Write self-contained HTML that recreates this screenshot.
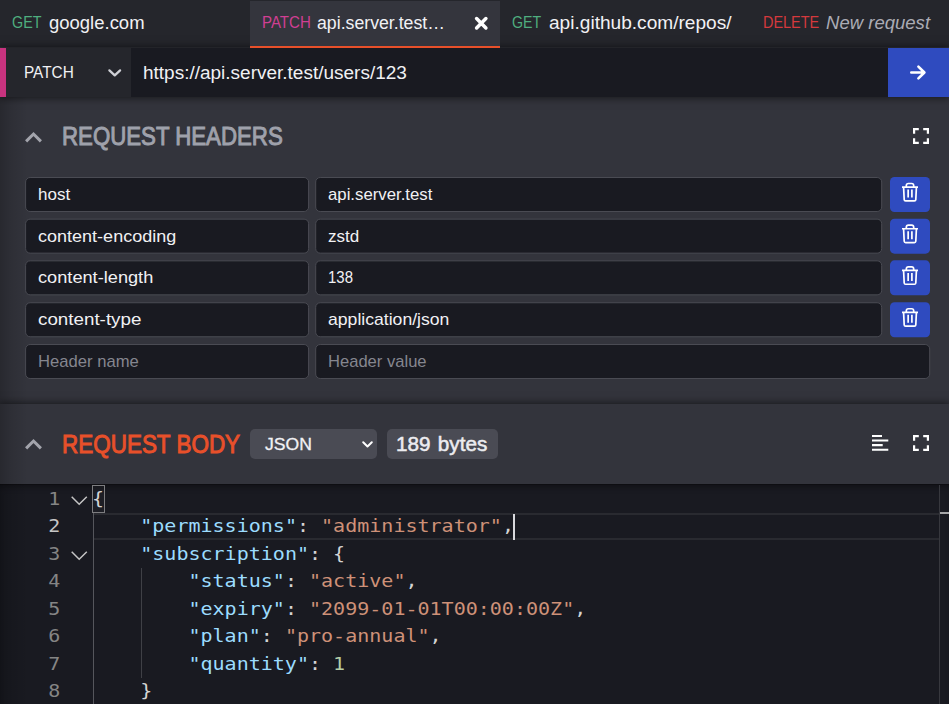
<!DOCTYPE html>
<html lang="en">
<head>
<meta charset="utf-8">
<title>HTTP Client</title>
<style>
*{box-sizing:border-box;margin:0;padding:0}
html,body{width:949px;height:704px;overflow:hidden;background:#33343c;}
body{font-family:"Liberation Sans",sans-serif;color:#f1f1f4;position:relative;}
.abs{position:absolute;white-space:nowrap;}
svg{position:absolute;overflow:visible}
/* tabs */
#tabs{position:absolute;left:0;top:0;width:949px;height:47px;background:#25262c;}
.tab{position:absolute;top:0;height:47px;}
.tx{position:absolute;transform-origin:0 0;white-space:nowrap;line-height:20px;height:20px;}
.tab .m{top:13.2px;font-size:16px;}
.tab .t{top:13px;font-size:17.5px;color:#f1f1f4;}
#tab2{left:250px;width:250px;top:1px;height:46.6px;background:#34353d;border-bottom:2.3px solid #e8502a;z-index:3;}
.get{color:#4fae7f}.patch{color:#d03f93}.delete{color:#d4393d}
/* url bar */
#urlbar{position:absolute;left:0;top:47.5px;width:949px;height:49.5px;background:#191a21;box-shadow:0 0 8px 1px rgba(0,0,0,.55);z-index:2;}
#pink{position:absolute;left:0;top:0;width:6px;height:49.5px;background:#c8337f;}
#method{position:absolute;left:6px;top:0;width:124.5px;height:49.5px;background:#25262c;}
#send{position:absolute;left:888px;top:0;width:61px;height:49.5px;background:#2f4bbf;}
/* headers */
.h1{font-size:26px;line-height:30px;height:30px;font-weight:normal;-webkit-text-stroke:1px currentColor;}
.inp{position:absolute;left:0;top:0;height:34.8px;background:#191a21;border:1px solid #4a4b53;border-radius:5px;}
.it{font-size:17px;color:#f1f1f4;}
.it.ph{color:#85868f;}
.del{position:absolute;left:0;top:0;width:40px;height:34.8px;background:#2f4bbf;border-radius:4.5px;}
/* body */
#bodyhead{position:absolute;left:0;top:404px;width:949px;height:80px;background:#33343c;box-shadow:0 0 8px 1px rgba(0,0,0,.55);}
.pill{position:absolute;top:24.75px;height:30.5px;background:#4a4b54;border-radius:5px;}
#editor{position:absolute;left:0;top:484px;width:949px;height:220px;background:#191a21;border-top:1px solid #0e0e12;box-shadow:inset 0 5px 6px -3px rgba(0,0,0,.35);font-family:"DejaVu Sans Mono","Liberation Mono",monospace;font-size:18px;}
.ln{position:absolute;left:0;width:60.4px;margin-top:-0.5px;transform:scaleX(1.11);transform-origin:100% 0;text-align:right;color:#858585;line-height:27.5px;height:27.5px;white-space:pre;}
.ln.act{color:#c6c6c6}
.cl{position:absolute;left:91.5px;margin-top:-0.5px;transform:scaleX(1.1123);transform-origin:0 0;white-space:pre;line-height:27.5px;height:27.5px;color:#d4d4d4;}
.k{color:#9cdcfe}.s{color:#ce9178}.n{color:#b5cea8}
.guide{position:absolute;width:1px;background:#3f4046;}
</style>
</head>
<body>
<div id="tabs">
  <div class="tab" style="left:0;width:250px"><span id="t1m" class="tx m get" style="left:12px;transform:scaleX(0.894)">GET</span><span id="t1t" class="tx t" style="left:49px;transform:scaleX(1.056)">google.com</span></div>
  <div class="tab" id="tab2"><span id="t2m" class="tx m patch" style="left:12.3px;margin-top:-1px;transform:scaleX(0.94)">PATCH</span><span id="t2t" class="tx t" style="left:67px;margin-top:-1px;transform:scaleX(1.012)">api.server.test…</span>
    <svg style="left:225.25px;top:15.6px" width="12.5" height="12.5" viewBox="0 0 12.5 12.5"><path d="M1.6 1.6L10.9 10.9M10.9 1.6L1.6 10.9" stroke="#fff" stroke-width="3.5" stroke-linecap="round"/></svg>
  </div>
  <div class="tab" style="left:500px;width:250px"><span id="t3m" class="tx m get" style="left:12px;transform:scaleX(0.886)">GET</span><span id="t3t" class="tx t" style="left:49px;transform:scaleX(1.091)">api.github.com/repos/</span></div>
  <div class="tab" style="left:750px;width:199px"><span id="t4m" class="tx m delete" style="left:13px;transform:scaleX(0.903)">DELETE</span><span id="t4t" class="tx t" style="left:76px;font-style:italic;color:#abacb5;transform:scaleX(1.059)">New request</span></div>
</div>
<div id="urlbar">
  <div id="pink"></div>
  <div id="method"><span id="um" class="tx" style="left:17.5px;top:15.7px;font-size:16px;transform:scaleX(0.96)">PATCH</span>
    <svg style="left:101.5px;top:21px" width="13.5" height="8" viewBox="0 0 13.5 8"><path d="M1.4 1.4L6.75 6.4L12.1 1.4" fill="none" stroke="#cfd0d6" stroke-width="2.3" stroke-linecap="round" stroke-linejoin="round"/></svg>
  </div>
  <span id="url" class="tx" style="left:143px;top:15.5px;font-size:17.5px;transform:scaleX(1.085)">https://api.server.test/users/123</span>
  <div id="send"><svg style="left:22px;top:17.5px" width="16" height="15" viewBox="0 0 16 15"><path d="M1.3 7.5H14.2M8.4 1.6L14.4 7.5L8.4 13.4" fill="none" stroke="#fff" stroke-width="2.6" stroke-linecap="round" stroke-linejoin="round"/></svg></div>
</div>

<!-- REQUEST HEADERS -->
<svg style="left:25px;top:132.2px" width="17" height="11" viewBox="0 0 17 11"><path d="M1.1 9.4L8.5 2L15.9 9.4" fill="none" stroke="#a3a4ac" stroke-width="3"/></svg>
<span id="hh" class="tx h1" style="left:61.7px;top:120.5px;color:#9fa1ab;transform:scaleX(0.855)">REQUEST HEADERS</span>
<svg style="left:913px;top:128.4px" width="16" height="16" viewBox="0 0 16 16"><path d="M1.1 5.8V1.1H5.8M10.2 1.1H14.9V5.8M14.9 10.2V14.9H10.2M5.8 14.9H1.1V10.2" fill="none" stroke="#fff" stroke-width="2.2"/></svg>

<div class="inp" style="transform:translate(25.1px,177px);width:283.7px"></div><span id="r1a" class="tx it" style="left:38px;top:184.5px;transform:scaleX(1.0)">host</span>
<div class="inp" style="transform:translate(315.2px,177px);width:567.4px"></div><span id="r1b" class="tx it" style="left:328px;top:184.5px;transform:scaleX(0.986)">api.server.test</span>
<div class="del" style="transform:translate(890px,177px)"><svg style="left:0;top:0" width="40" height="34.5" viewBox="0 0 40 34.5"><path d="M12 10.1H28M16.3 9.8V8.6Q16.3 6.5 18.4 6.5H21.6Q23.7 6.5 23.7 8.6V9.8M13.6 10.4L14.2 22.6Q14.3 23.9 15.6 23.9H24.4Q25.7 23.9 25.8 22.6L26.4 10.4M18.15 12.6V20.6M21.9 12.6V20.6" fill="none" stroke="#fff" stroke-width="1.7" stroke-linejoin="round"/></svg></div>
<div class="inp" style="transform:translate(25.1px,218.65px);width:283.7px"></div><span id="r2a" class="tx it" style="left:38px;top:227px;transform:scaleX(1.06)">content-encoding</span>
<div class="inp" style="transform:translate(315.2px,218.65px);width:567.4px"></div><span id="r2b" class="tx it" style="left:328px;top:227px;transform:scaleX(1.0)">zstd</span>
<div class="del" style="transform:translate(890px,218.65px)"><svg style="left:0;top:0" width="40" height="34.5" viewBox="0 0 40 34.5"><path d="M12 10.1H28M16.3 9.8V8.6Q16.3 6.5 18.4 6.5H21.6Q23.7 6.5 23.7 8.6V9.8M13.6 10.4L14.2 22.6Q14.3 23.9 15.6 23.9H24.4Q25.7 23.9 25.8 22.6L26.4 10.4M18.15 12.6V20.6M21.9 12.6V20.6" fill="none" stroke="#fff" stroke-width="1.7" stroke-linejoin="round"/></svg></div>
<div class="inp" style="transform:translate(25.1px,260.35px);width:283.7px"></div><span id="r3a" class="tx it" style="left:38px;top:267.5px;transform:scaleX(1.07)">content-length</span>
<div class="inp" style="transform:translate(315.2px,260.35px);width:567.4px"></div><span id="r3b" class="tx it" style="left:328px;top:267.5px;transform:scaleX(0.88)">138</span>
<div class="del" style="transform:translate(890px,260.35px)"><svg style="left:0;top:0" width="40" height="34.5" viewBox="0 0 40 34.5"><path d="M12 10.1H28M16.3 9.8V8.6Q16.3 6.5 18.4 6.5H21.6Q23.7 6.5 23.7 8.6V9.8M13.6 10.4L14.2 22.6Q14.3 23.9 15.6 23.9H24.4Q25.7 23.9 25.8 22.6L26.4 10.4M18.15 12.6V20.6M21.9 12.6V20.6" fill="none" stroke="#fff" stroke-width="1.7" stroke-linejoin="round"/></svg></div>
<div class="inp" style="transform:translate(25.1px,302.25px);width:283.7px"></div><span id="r4a" class="tx it" style="left:38px;top:309.75px;transform:scaleX(1.105)">content-type</span>
<div class="inp" style="transform:translate(315.2px,302.25px);width:567.4px"></div><span id="r4b" class="tx it" style="left:328px;top:309.75px;transform:scaleX(1.036)">application/json</span>
<div class="del" style="transform:translate(890px,302.25px)"><svg style="left:0;top:0" width="40" height="34.5" viewBox="0 0 40 34.5"><path d="M12 10.1H28M16.3 9.8V8.6Q16.3 6.5 18.4 6.5H21.6Q23.7 6.5 23.7 8.6V9.8M13.6 10.4L14.2 22.6Q14.3 23.9 15.6 23.9H24.4Q25.7 23.9 25.8 22.6L26.4 10.4M18.15 12.6V20.6M21.9 12.6V20.6" fill="none" stroke="#fff" stroke-width="1.7" stroke-linejoin="round"/></svg></div>
<div class="inp" style="transform:translate(25.1px,344px);width:283.7px"></div><span id="r5a" class="tx it ph" style="left:38px;top:351.5px;transform:scaleX(0.978)">Header name</span>
<div class="inp" style="transform:translate(315.2px,344px);width:614.9px"></div><span id="r5b" class="tx it ph" style="left:328px;top:351.5px;transform:scaleX(0.975)">Header value</span>

<!-- REQUEST BODY -->
<div id="bodyhead">
  <svg style="left:25px;top:35.1px" width="17" height="11" viewBox="0 0 17 11"><path d="M1.1 9.4L8.5 2L15.9 9.4" fill="none" stroke="#a3a4ac" stroke-width="3"/></svg>
  <div class="pill" style="left:250px;width:127px"></div>
  <span id="bh" class="tx h1" style="left:61.7px;top:24.8px;color:#e8502a;transform:scaleX(0.864)">REQUEST BODY</span>
  <span id="sel" class="tx" style="left:264.5px;top:29.6px;font-size:17.3px;color:#f1f1f4;-webkit-text-stroke:0.3px #f1f1f4;transform:scaleX(1.017)">JSON</span>
  <svg style="left:361.5px;top:37px" width="11" height="7" viewBox="0 0 11 7"><path d="M1.2 1.3L5.5 5.5L9.8 1.3" fill="none" stroke="#fff" stroke-width="2" stroke-linecap="round" stroke-linejoin="round"/></svg>
  <div class="pill" style="left:387px;width:111.25px"></div>
  <span id="by" class="tx" style="left:395.7px;top:29.5px;font-size:19.5px;color:#ececf0;-webkit-text-stroke:0.5px #ececf0;word-spacing:1.5px;transform:scaleX(1.06)">189 bytes</span>
  <svg style="left:871.75px;top:31px" width="16.5" height="16" viewBox="0 0 16.5 16"><path d="M0 1H10M0 5.5H16.3M0 10.1H10.7M0 14.8H16.3" fill="none" stroke="#fff" stroke-width="2.1"/></svg>
  <svg style="left:913px;top:31px" width="16" height="16" viewBox="0 0 16 16"><path d="M1.1 5.8V1.1H5.8M10.2 1.1H14.9V5.8M14.9 10.2V14.9H10.2M5.8 14.9H1.1V10.2" fill="none" stroke="#fff" stroke-width="2.2"/></svg>
</div>
<div id="editor">
  <div class="abs" style="left:92.5px;top:27.5px;width:846.5px;height:27.5px;border-top:2px solid #292a30;border-bottom:2px solid #292a30"></div>
  <div class="guide" style="left:92.5px;top:27.5px;height:200px;background:#55565c"></div>
  <div class="guide" style="left:140.5px;top:82.5px;height:110px"></div>
  <div class="abs" style="left:92.3px;top:0.3px;width:12.7px;height:28px;border:1px solid #7d7d80;background:rgba(255,255,255,.02)"></div>
  <div class="ln" style="top:0">1</div><div class="cl" id="c1" style="top:0">{</div>
  <div class="ln act" style="top:27.5px">2</div><div class="cl" id="c2" style="top:27.5px">    <span class="k">"permissions"</span>: <span class="s">"administrator"</span>,</div>
  <div class="ln" style="top:55px">3</div><div class="cl" style="top:55px">    <span class="k">"subscription"</span>: {</div>
  <div class="ln" style="top:82.5px">4</div><div class="cl" style="top:82.5px">        <span class="k">"status"</span>: <span class="s">"active"</span>,</div>
  <div class="ln" style="top:110px">5</div><div class="cl" id="c5" style="top:110px">        <span class="k">"expiry"</span>: <span class="s">"2099-01-01T00:00:00Z"</span>,</div>
  <div class="ln" style="top:137.5px">6</div><div class="cl" style="top:137.5px">        <span class="k">"plan"</span>: <span class="s">"pro-annual"</span>,</div>
  <div class="ln" style="top:165px">7</div><div class="cl" style="top:165px">        <span class="k">"quantity"</span>: <span class="n">1</span></div>
  <div class="ln" style="top:192.5px">8</div><div class="cl" style="top:192.5px">    }</div>
  <svg style="left:70.75px;top:10.5px" width="16.5" height="9.5" viewBox="0 0 16.5 9.5"><path d="M0.7 0.8L8.2 8.3L15.8 0.8" fill="none" stroke="#c5c5c5" stroke-width="1.5"/></svg>
  <svg style="left:70.75px;top:65.5px" width="16.5" height="9.5" viewBox="0 0 16.5 9.5"><path d="M0.7 0.8L8.2 8.3L15.8 0.8" fill="none" stroke="#c5c5c5" stroke-width="1.5"/></svg>
  <div class="abs" style="left:512.75px;top:28.5px;width:2.25px;height:26px;background:#d8d8dc"></div>
  <div class="abs" style="left:939px;top:0;width:1px;height:220px;background:#37383e"></div>
  <div class="abs" style="left:940px;top:26.5px;width:9px;height:2px;background:#a6a6a8"></div>
</div>
<div class="abs" style="left:0;top:97px;width:28px;height:607px;background:linear-gradient(90deg,rgba(0,0,0,.22),rgba(0,0,0,.1) 40%,rgba(0,0,0,0));pointer-events:none"></div>
</body>
</html>
